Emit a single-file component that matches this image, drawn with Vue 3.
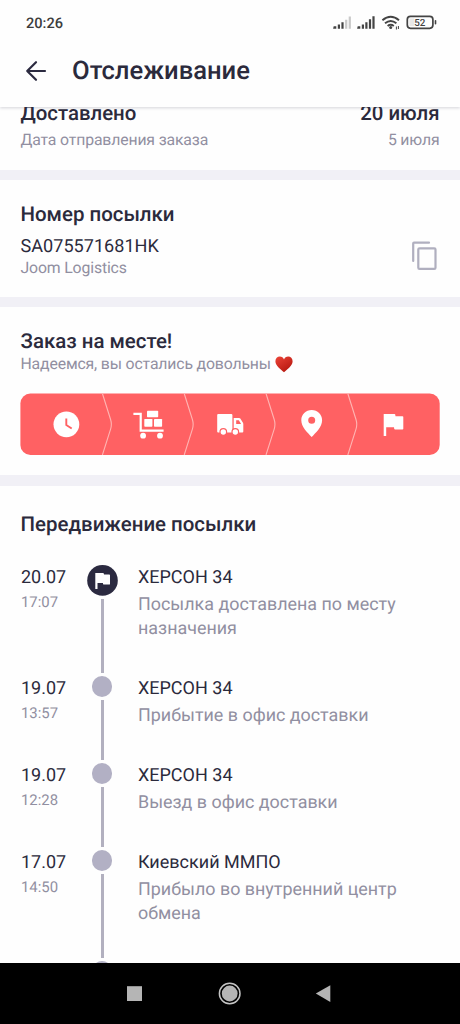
<script setup>
const events = [
  { date: '20.07', time: '17:07', place: 'ХЕРСОН 34', lines: ['Посылка доставлена по месту', 'назначения'], final: true },
  { date: '19.07', time: '13:57', place: 'ХЕРСОН 34', lines: ['Прибытие в офис доставки'] },
  { date: '19.07', time: '12:28', place: 'ХЕРСОН 34', lines: ['Выезд в офис доставки'] },
  { date: '17.07', time: '14:50', place: 'Киевский ММПО', lines: ['Прибыло во внутренний центр', 'обмена'] },
]
</script>

<template>
  <div class="screen">
    <header class="header">
      <div class="status">
        <span class="clock">20:26</span>
        <svg class="status-icons" width="106" height="20" viewBox="332 12 106 20">
          <g fill="#444">
            <path d="M333.7 26.2h2.6v2.6h-3.2zM337.8 24.6h2.2v4.2h-2.2zM341.4 22.3h2.2v6.5h-2.2z" />
            <path fill="#c9c9c9" d="M345.1 19.8h2.2v9h-2.2zM348.7 16.4h2.2v12.4h-2.2z" />
            <path d="M357.7 26.2h2.6v2.6h-3.2zM361.8 24.6h2.2v4.2h-2.2zM365.3 22.3h2.2v6.5h-2.2zM368.9 19.3h2.2v9.5h-2.2zM372.4 16.2h2.2v12.6h-2.2z" />
            <circle cx="390.7" cy="27.6" r="1.5" />
            <rect x="434.7" y="20" width="1.6" height="4.6" rx=".8" />
          </g>
          <g fill="none" stroke="#444">
            <path stroke-width="1.9" d="M382.4 20.2q8.300-7 16.600 0M385 23.300q5.700-4.600 11.400 0M387.600 26q3.100-2.400 6.200 0" />
            <path stroke-width="1" d="M396.400 26.500v3M398.400 26v3" />
            <rect x="407.300" y="16.300" width="25.600" height="12" rx="3.200" stroke-width="1.700" />
          </g>
          <rect x="409.400" y="18.400" width="5" height="7.800" fill="#e8e8e8" />
          <text x="419.700" y="26" text-anchor="middle" class="battery">52</text>
        </svg>
      </div>
      <div class="bar">
        <svg width="22" height="22" viewBox="25 60 22 22" fill="none" stroke="#2b2a40" stroke-width="2.200" stroke-linecap="round" stroke-linejoin="round">
          <path d="M45 71H27.200M36 62.200L27.200 71l8.800 8.800" />
        </svg>
        <h1>Отслеживание</h1>
      </div>
    </header>

    <main class="content">
      <section class="delivered">
        <div class="pair strong"><span>Доставлено</span><span>20 июля</span></div>
        <div class="pair muted"><span>Дата отправления заказа</span><span>5 июля</span></div>
      </section>

      <section class="parcel">
        <div>
          <h2>Номер посылки</h2>
          <div class="code">SA075571681HK</div>
          <div class="muted carrier">Joom Logistics</div>
        </div>
        <svg class="copy" width="28" height="32" viewBox="411 240 28 32" fill="none" stroke="#b0afbf" stroke-width="2.200">
          <path stroke-linecap="round" stroke-linejoin="round" d="M413.200 261v-17.500q0-.8.800-.8h15" />
          <rect x="418.300" y="248.300" width="17.200" height="20.600" rx="1.200" />
        </svg>
      </section>

      <section class="arrived">
        <h2>Заказ на месте!</h2>
        <div class="hope muted">
          <span>Надеемся, вы остались довольны</span>
          <svg width="18" height="17" viewBox="0 0 18 17">
            <defs>
              <linearGradient id="heart" x1="0" y1="0" x2=".7" y2="1">
                <stop offset="0" stop-color="#ec4438" /><stop offset="1" stop-color="#b5170f" />
              </linearGradient>
            </defs>
            <path fill="url(#heart)" d="M9 16.300C6 13.500.4 9.900.4 5.300.4 2.500 2.400.6 4.800.6 6.800.6 8.400 1.800 9 3.500 9.600 1.800 11.200.6 13.200.6c2.400 0 4.400 1.900 4.400 4.700C17.600 9.900 12 13.500 9 16.300z" />
          </svg>
        </div>
        <svg class="progress" width="420" height="62" viewBox="20 393 420 62">
          <rect x="20.400" y="393.500" width="419.300" height="61.500" rx="10" fill="#ff6163" />
          <g fill="none" stroke="#ffb5b3" stroke-width="1.100">
            <path v-for="i in 4" :key="i" :transform="`translate(${(i - 1) * 81.8} 0)`" d="M102.400 393.500L110.600 419.500q1.500 4.800 0 9.600L102.400 455" />
          </g>
          <circle cx="66.400" cy="424.300" r="12.900" fill="#fff" />
          <path d="M66.300 418.400v6.700l5.400 3.400" fill="none" stroke="#ff6163" stroke-width="1.900" />
          <g fill="#fff">
            <path fill="none" stroke="#fff" stroke-width="2.200" d="M133.400 413.800h7.300v16.900h22.900" />
            <rect x="147" y="410.800" width="11.200" height="6.400" rx=".7" />
            <rect x="144.300" y="418.900" width="8.100" height="7.900" rx=".7" />
            <rect x="154" y="418.900" width="8.100" height="7.900" rx=".7" />
            <circle cx="143.100" cy="435.700" r="2.900" /><circle cx="160" cy="435.700" r="2.900" />
            <path d="M218.200 413.900h13.200q1 0 1 1v17.600h-14.200q-1 0-1-1v-16.600q0-1 1-1z" />
            <path d="M233.700 417.900h5.300q.8 0 1.300.7l2.500 4q.5.700.5 1.500v7.400q0 1-1 1h-8.600z" />
          </g>
          <path fill="#ff6163" d="M236.200 420.200h2.600l2.300 3.700h-4.900z" />
          <g fill="#fff" stroke="#ff6163" stroke-width="1.200"><circle cx="223.300" cy="432" r="3.300" /><circle cx="235.300" cy="432" r="3.300" /></g>
          <path fill="#fff" fill-rule="evenodd" d="M311.700 410c-5.900 0-10.400 4.500-10.400 10.200 0 6.900 6.500 12.600 10.400 16.800 3.900-4.200 10.400-9.900 10.400-16.800 0-5.700-4.500-10.200-10.400-10.200zm0 6.700a3.500 3.500 0 1 1 0 7 3.500 3.500 0 0 1 0-7z" />
          <path fill="#fff" d="M383.700 413.900h10.700q.8 0 .9.800l.2 1.600h7q.8 0 .8.800v11.700q0 .8-.8.800h-7.400q-.8 0-.9-.8l-.2-1.600h-7.800v8.700h-2.500z" />
        </svg>
      </section>

      <section class="movement">
        <h2>Передвижение посылки</h2>
        <div v-for="(e, i) in events" :key="i" class="event" :class="{ tall: e.lines.length > 1 }">
          <div class="when">
            <div class="date">{{ e.date }}</div>
            <div class="time">{{ e.time }}</div>
          </div>
          <div class="rail">
            <svg v-if="e.final" width="31" height="31" viewBox="0 0 31 31">
              <circle cx="15.500" cy="15.400" r="15.300" fill="#2b2a40" />
              <path fill="#fff" d="M8.300 7.900h7.800q.6 0 .7.600l.2 1h5.300q.7 0 .7.700v8.700q0 .7-.7.700h-5.500q-.6 0-.7-.6l-.2-1.100h-5.400v6.100H8.300z" />
            </svg>
            <span v-else class="dot"></span>
            <span class="line"></span>
          </div>
          <div class="what">
            <div class="place">{{ e.place }}</div>
            <div class="desc"><div v-for="l in e.lines" :key="l"><span>{{ l }}</span></div></div>
          </div>
        </div>
        <div class="event"><div class="when"></div><div class="rail"><span class="dot"></span></div></div>
      </section>
    </main>

    <nav class="nav">
      <svg width="460" height="61" viewBox="0 963 460 61">
        <rect x="127" y="986.200" width="15" height="14.800" fill="#b5b5b5" />
        <circle cx="229.700" cy="993.500" r="10.300" fill="none" stroke="#c4c4c4" stroke-width="1.500" />
        <circle cx="229.700" cy="993.500" r="7.900" fill="#b5b5b5" />
        <path d="M315.800 993.500L330.300 985.300v16.600z" fill="#b5b5b5" />
      </svg>
    </nav>
  </div>
</template>

<style>
body { margin: 0; background: #fff; }
</style>

<style scoped>
.screen {
  width: 460px;
  height: 1024px;
  display: flex;
  flex-direction: column;
  overflow: hidden;
  background: #fefefe;
  color: #2b2a3c;
  font-family: Roboto, "Noto Sans", sans-serif;
  text-rendering: geometricPrecision;
}
.header {
  flex: none;
  height: 107px;
  background: #fefefe;
  box-shadow: 0 1px 3px rgba(40, 40, 70, .2);
  z-index: 1;
}
.status {
  display: flex;
  justify-content: space-between;
  padding: 12px 22px 0 26px;
  height: 32px;
  box-sizing: border-box;
}
.clock { font-size: 14.600px; line-height: 22px; font-weight: 500; color: #3c3c3c; }
.battery { font-size: 9.800px; font-weight: 500; fill: #444; }
.bar { display: flex; align-items: center; height: 78px; padding-left: 25px; gap: 25px; }
h1 { margin: 0; font-size: 25.600px; line-height: 32px; font-weight: 500; white-space: nowrap; }
h2 { margin: 0; font-size: 20.450px; line-height: 26px; font-weight: 500; white-space: nowrap; }
.content { flex: none; height: 856px; overflow: hidden; }
section { box-sizing: border-box; padding: 0 20.500px; border-bottom: 10px solid #f1f0f6; }
.muted { color: #918fa1; font-size: 15.800px; letter-spacing: -.15px; line-height: 22px; }
.pair { display: flex; justify-content: space-between; }
.strong { font-size: 20.400px; line-height: 26px; font-weight: 500; }
.delivered { height: 73px; display: flex; flex-direction: column; }
.delivered .strong { margin-top: -7px; }
.delivered .muted { margin-top: 3px; }
.parcel { height: 127px; padding-top: 21px; display: flex; justify-content: space-between; }
.code { font-size: 18.100px; line-height: 24px; margin-top: 8px; }
.carrier { margin-top: -2px; }
.copy { margin: 39px 1px 0 0; }
.arrived { height: 179px; padding-top: 21px; border-bottom-width: 11px; }
.hope { display: flex; align-items: center; gap: 4px; margin-top: -1px; }
.progress { display: block; margin: 18px 0 0 -.5px; }
.movement { border: 0; padding-top: 25px; }
.movement h2 { margin-bottom: 28px; }
.event { display: flex; height: 87px; }
.event.tall { height: 111px; }
.when { width: 65.500px; padding: 1px 0 0 .5px; box-sizing: content-box; }
.date { font-size: 18px; line-height: 24px; }
.time { font-size: 14.900px; line-height: 20px; color: #918fa1; margin-top: 2px; }
.rail { width: 31px; display: flex; flex-direction: column; align-items: center; }
.rail svg { display: block; flex: none; }
.dot { width: 20.500px; height: 20.500px; border-radius: 50%; background: #b2b0c4; }
.line { flex: 1; width: 3px; margin: 3px 0; background: #b2b0bf; }
.what { padding: 1px 0 0 20.500px; white-space: nowrap; }
.place { font-size: 18px; line-height: 24px; }
.desc { font-size: 17.900px; line-height: 24px; color: #918fa1; margin-top: 3px; }
.nav { flex: none; height: 61px; background: #000; z-index: 1; }
.nav svg { display: block; }
</style>
